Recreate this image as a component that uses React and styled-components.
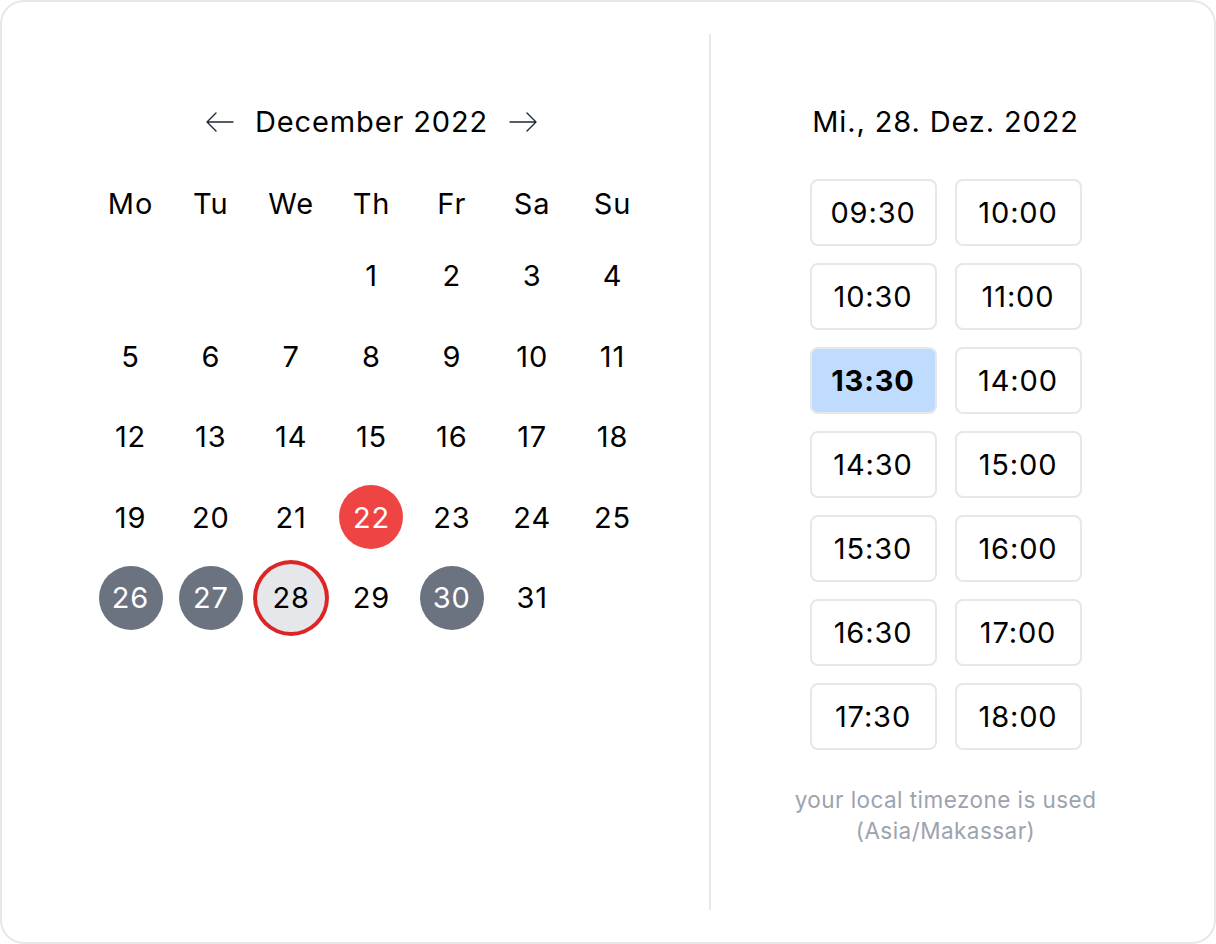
import React from 'react';
import styled, { createGlobalStyle, css } from 'styled-components';

const GlobalStyle = createGlobalStyle`
  html, body {
    margin: 0;
    padding: 0;
    background: #ffffff;
    font-family: Inter, "Noto Sans", sans-serif;
    color: #000000;
  }
  * {
    box-sizing: border-box;
  }
`;

const weekdays = ['Mo', 'Tu', 'We', 'Th', 'Fr', 'Sa', 'Su'];

const booked = [26, 27, 30];
const today = 22;
const selectedDay = 28;

const times = [
  '09:30', '10:00',
  '10:30', '11:00',
  '13:30', '14:00',
  '14:30', '15:00',
  '15:30', '16:00',
  '16:30', '17:00',
  '17:30', '18:00',
];
const selectedTime = '13:30';

const ArrowLeft = () => (
  <svg width="30" height="24" viewBox="0 0 30 24" fill="none" stroke="#1f2937" strokeWidth="1.4" strokeLinecap="round" strokeLinejoin="round">
    <path d="M28 12H2M11 3l-9 9 9 9" />
  </svg>
);

const ArrowRight = () => (
  <svg width="30" height="24" viewBox="0 0 30 24" fill="none" stroke="#1f2937" strokeWidth="1.4" strokeLinecap="round" strokeLinejoin="round">
    <path d="M2 12h26M19 3l9 9-9 9" />
  </svg>
);

const App = () => {
  const cells = [];
  for (let i = 0; i < 3; i++) cells.push(<Cell key={`e${i}`} />);
  for (let d = 1; d <= 31; d++) {
    let variant = 'plain';
    if (d === today) variant = 'today';
    else if (booked.includes(d)) variant = 'booked';
    else if (d === selectedDay) variant = 'selected';
    cells.push(
      <Cell key={d}>
        <Day variant={variant}>{d}</Day>
      </Cell>
    );
  }

  return (
    <>
      <GlobalStyle />
      <Card>
        <CalendarPane>
          <MonthBar>
            <NavButton aria-label="previous month">
              <ArrowLeft />
            </NavButton>
            <MonthTitle>December 2022</MonthTitle>
            <NavButton aria-label="next month">
              <ArrowRight />
            </NavButton>
          </MonthBar>
          <Grid>
            {weekdays.map(w => (
              <Weekday key={w}>{w}</Weekday>
            ))}
            {cells}
          </Grid>
        </CalendarPane>
        <Divider />
        <TimesPane>
          <DateTitle>Mi., 28. Dez. 2022</DateTitle>
          <SlotGrid>
            {times.map(t => (
              <Slot key={t} active={t === selectedTime ? 1 : 0}>
                {t}
              </Slot>
            ))}
          </SlotGrid>
          <Note>
            your local timezone is used
            <br />
            (Asia/Makassar)
          </Note>
        </TimesPane>
      </Card>
    </>
  );
};

export default App;

const Card = styled.div`
  width: 1216px;
  height: 944px;
  border: 2px solid #e5e7eb;
  border-radius: 24px;
  padding: 32px;
  display: flex;
  background: #ffffff;
  font-size: 29px;
  letter-spacing: 0.03em;
`;

const CalendarPane = styled.div`
  flex: 0 0 675px;
  display: flex;
  flex-direction: column;
  align-items: center;
  padding-top: 68px;
`;

const Divider = styled.div`
  width: 2px;
  background: #e5e7eb;
  align-self: stretch;
`;

const TimesPane = styled.div`
  flex: 1;
  display: flex;
  flex-direction: column;
  align-items: center;
  padding-top: 68px;
  padding-right: 2px;
`;

const MonthBar = styled.div`
  display: flex;
  align-items: center;
  gap: 20px;
  height: 40px;
`;

const NavButton = styled.button`
  border: none;
  background: none;
  padding: 0;
  display: flex;
  align-items: center;
  cursor: pointer;
`;

const MonthTitle = styled.div`
  line-height: 40px;
  font-weight: 400;
`;

const Grid = styled.div`
  margin-top: 37px;
  display: grid;
  grid-template-columns: repeat(7, 80.33px);
  grid-template-rows: 48px;
  grid-auto-rows: 64px;
  row-gap: 16.5px;
`;

const Weekday = styled.div`
  display: flex;
  align-items: center;
  justify-content: center;
`;

const Cell = styled.div`
  display: flex;
  align-items: center;
  justify-content: center;
`;

const dayVariants = {
  plain: css`
    color: #000000;
  `,
  today: css`
    background: #ef4444;
    color: #ffffff;
  `,
  booked: css`
    background: #6b7280;
    color: #ffffff;
  `,
  selected: css`
    background: #e5e7eb;
    color: #000000;
    box-shadow: 0 0 0 2px #e5e7eb, 0 0 0 6px #dc2626;
  `,
};

const Day = styled.div`
  width: 64px;
  height: 64px;
  border-radius: 50%;
  display: flex;
  align-items: center;
  justify-content: center;
  ${props => dayVariants[props.variant]}
`;

const DateTitle = styled.div`
  line-height: 40px;
`;

const SlotGrid = styled.div`
  margin-top: 37px;
  display: grid;
  grid-template-columns: repeat(2, 127px);
  grid-auto-rows: 67px;
  column-gap: 18px;
  row-gap: 17px;
`;

const Slot = styled.button`
  border: 2px solid #e5e7eb;
  border-radius: 8px;
  background: ${props => (props.active ? '#bfdbfe' : '#ffffff')};
  font-family: inherit;
  font-size: inherit;
  letter-spacing: inherit;
  font-weight: ${props => (props.active ? 700 : 400)};
  color: #000000;
  padding: 0;
  cursor: pointer;
`;

const Note = styled.div`
  margin-top: 34px;
  text-align: center;
  font-size: 22.5px;
  line-height: 31px;
  letter-spacing: 0.02em;
  color: #9ca3af;
`;
